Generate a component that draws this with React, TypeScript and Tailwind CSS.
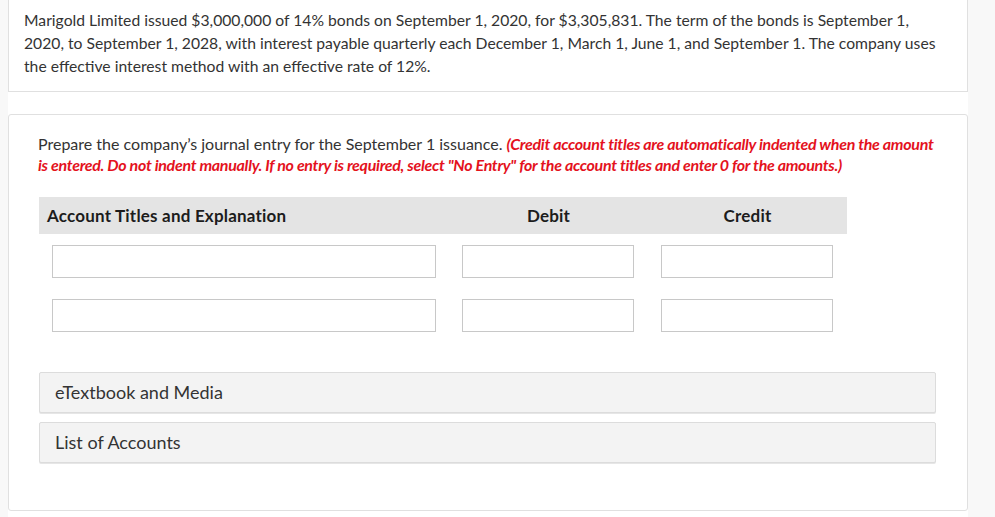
const columns = [
  { label: "Account Titles and Explanation", align: "left" },
  { label: "Debit", align: "center" },
  { label: "Credit", align: "center" },
];

const rows = [1, 2];

const resources = ["eTextbook and Media", "List of Accounts"];

export default function App() {
  return (
    <main className="min-h-screen bg-[#f8f8f8] font-['Lato','Liberation_Sans',sans-serif] text-[#333]">
      <div className="ml-2 w-[960px] bg-white pb-[6px]">
        <section className="-mt-px border border-[#e0e0e0] bg-white pb-[13px] pl-[15px] pr-[20px] pt-[9px] text-[15.7px] leading-[23px]">
          <p>
            Marigold Limited issued $3,000,000 of 14% bonds on September 1, 2020, for $3,305,831. The
            term of the bonds is September 1, 2020, to September 1, 2028, with interest payable
            quarterly each December 1, March 1, June 1, and September 1. The company uses the
            effective interest method with an effective rate of 12%.
          </p>
        </section>

        <section className="mt-[22px] rounded-[3px] border border-[#e0e0e0] bg-white pb-[47px] pl-[29px] pr-[26px] pt-[18px]">
          <p className="text-[16px] leading-[21px]">
            Prepare the company’s journal entry for the September 1 issuance.{" "}
            <span className="font-bold italic tracking-[-0.3px] text-[#e4121d]">
              (Credit account titles are automatically indented when the amount is entered. Do not
              indent manually. If no entry is required, select "No Entry" for the account titles
              and enter 0 for the amounts.)
            </span>
          </p>

          <table className="mt-[22px] ml-px w-[808px] border-collapse">
            <thead>
              <tr className="h-[37px] bg-[#e4e4e4] text-[17px] font-bold tracking-[0.2px] text-[#1c1c1c]">
                {columns.map((col) => (
                  <th
                    key={col.label}
                    className={`${
                      col.align === "left" ? "w-[410px] pl-2 text-left" : "w-[199px] text-center"
                    } font-bold`}
                  >
                    {col.label}
                  </th>
                ))}
              </tr>
            </thead>
            <tbody>
              {rows.map((row) => (
                <tr key={row}>
                  <td className="px-[13px] pb-[10px] pt-[11px]">
                    <input
                      type="text"
                      className="block h-[33px] w-full border border-[#c8c8c8] bg-white outline-none"
                    />
                  </td>
                  <td className="pb-[10px] pl-[13px] pr-[14px] pt-[11px]">
                    <input
                      type="text"
                      className="block h-[33px] w-full border border-[#c8c8c8] bg-white outline-none"
                    />
                  </td>
                  <td className="pb-[10px] pl-[13px] pr-[14px] pt-[11px]">
                    <input
                      type="text"
                      className="block h-[33px] w-full border border-[#c8c8c8] bg-white outline-none"
                    />
                  </td>
                </tr>
              ))}
            </tbody>
          </table>

          <div className="ml-px mt-[30px] flex w-[897px] flex-col gap-[9px]">
            {resources.map((item) => (
              <button
                key={item}
                type="button"
                className="h-[41px] rounded-[2px] border border-[#dcdcdc] bg-[#f3f3f3] pl-[15px] text-left text-[18px] text-[#333] shadow-[0_1px_0_#e6e6e6]"
              >
                {item}
              </button>
            ))}
          </div>
        </section>
      </div>
    </main>
  );
}
